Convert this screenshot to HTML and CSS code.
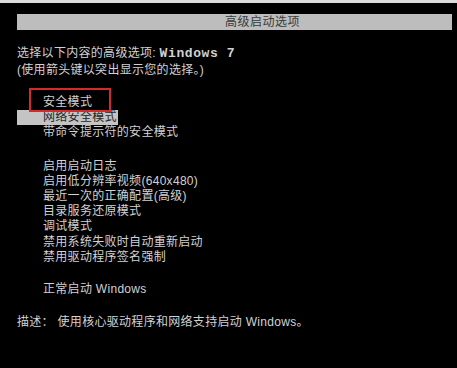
FILE: index.html
```html
<!DOCTYPE html>
<html lang="zh-CN">
<head>
<meta charset="utf-8">
<title>高级启动选项</title>
<link rel="stylesheet" href="styles.css">
</head>
<body>
<div class="screen">
  <div class="titlebar"><span class="title-text">高级启动选项</span></div>
  <div class="intro">
    <p>选择以下内容的高级选项: <span class="mono">Windows 7</span></p>
    <p>(使用箭头键以突出显示您的选择。)</p>
  </div>
  <ul class="menu group1">
    <li class="item">安全模式</li>
    <li class="item selected">网络安全模式</li>
    <li class="item">带命令提示符的安全模式</li>
  </ul>
  <ul class="menu group2">
    <li class="item">启用启动日志</li>
    <li class="item">启用低分辨率视频(640x480)</li>
    <li class="item">最近一次的正确配置(高级)</li>
    <li class="item">目录服务还原模式</li>
    <li class="item">调试模式</li>
    <li class="item">禁用系统失败时自动重新启动</li>
    <li class="item">禁用驱动程序签名强制</li>
  </ul>
  <ul class="menu group3">
    <li class="item">正常启动 Windows</li>
  </ul>
  <p class="desc">描述： 使用核心驱动程序和网络支持启动 Windows。</p>
  <div class="mark-box"></div>
</div>
</body>
</html>
```
FILE: styles.css
```css
html, body {
  margin: 0;
  padding: 0;
  background: #000;
}

body {
  width: 457px;
  height: 368px;
  overflow: hidden;
}

.screen {
  position: relative;
  height: 365px;
  border-top: 3px solid #dcdcdc;
  background: #000;
  font-family: "Liberation Sans", "Noto Sans CJK SC", sans-serif;
  font-size: 12px;
  letter-spacing: 0.3px;
  color: #d2d2d2;
  padding-top: 11px;
  box-sizing: content-box;
}

.titlebar {
  margin: 0 5px 0 17px;
  height: 16px;
  line-height: 16px;
  background: #bdbdbd;
  color: #3a3a3a;
  padding-left: 208px;
}

.title-text {
  letter-spacing: 0.5px;
}

.intro {
  margin: 15px 0 0 17px;
  line-height: 17px;
}

.intro p {
  margin: 0;
}

.mono {
  font-family: "Liberation Mono", monospace;
  font-size: 13px;
  font-weight: bold;
  letter-spacing: 0.6px;
}

.menu {
  list-style: none;
  margin: 0 0 0 17px;
  padding: 0;
}

.group1 {
  margin-top: 15.5px;
  line-height: 15px;
}

.group2 {
  margin-top: 19px;
  line-height: 15.2px;
}

.group3 {
  margin-top: 16.6px;
  line-height: 15.2px;
}

.item {
  width: max-content;
  padding: 0 1px 0 26px;
}

.selected {
  background: #c4c4c4;
  color: #262626;
}

.desc {
  margin: 17.8px 0 0 17px;
  line-height: 15.2px;
}

.mark-box {
  position: absolute;
  left: 29px;
  top: 85px;
  width: 78px;
  height: 20px;
  border: 2px solid #d42a2a;
}
```
